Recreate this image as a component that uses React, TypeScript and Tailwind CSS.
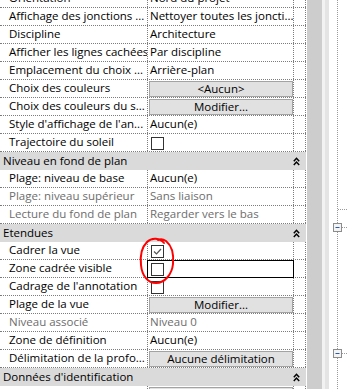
import React from "react";

type Item =
  | { t: "h"; label: string }
  | {
      t: "p";
      name: string;
      value?: string;
      btn?: string;
      check?: "on" | "off";
      grey?: boolean;
      focus?: boolean;
    };

const items: Item[] = [
  { t: "p", name: "Orientation", value: "Nord du projet" },
  { t: "p", name: "Affichage des jonctions ...", value: "Nettoyer toutes les joncti..." },
  { t: "p", name: "Discipline", value: "Architecture" },
  { t: "p", name: "Afficher les lignes cachées", value: "Par discipline" },
  { t: "p", name: "Emplacement du choix ...", value: "Arrière-plan" },
  { t: "p", name: "Choix des couleurs", btn: "<Aucun>" },
  { t: "p", name: "Choix des couleurs du s...", btn: "Modifier..." },
  { t: "p", name: "Style d'affichage de l'an...", value: "Aucun(e)" },
  { t: "p", name: "Trajectoire du soleil", check: "off" },
  { t: "h", label: "Niveau en fond de plan" },
  { t: "p", name: "Plage: niveau de base", value: "Aucun(e)" },
  { t: "p", name: "Plage: niveau supérieur", value: "Sans liaison", grey: true },
  { t: "p", name: "Lecture du fond de plan", value: "Regarder vers le bas", grey: true },
  { t: "h", label: "Etendues" },
  { t: "p", name: "Cadrer la vue", check: "on" },
  { t: "p", name: "Zone cadrée visible", check: "off", focus: true },
  { t: "p", name: "Cadrage de l'annotation", check: "off" },
  { t: "p", name: "Plage de la vue", btn: "Modifier..." },
  { t: "p", name: "Niveau associé", value: "Niveau 0", grey: true },
  { t: "p", name: "Zone de définition", value: "Aucun(e)" },
  { t: "p", name: "Délimitation de la profo...", btn: "Aucune délimitation" },
  { t: "h", label: "Données d'identification" },
  { t: "p", name: "Gabarit de vue", btn: "<Aucun>" },
];

function Chevrons() {
  return (
    <svg width="7" height="9" viewBox="0 0 7 9" className="block">
      <path d="M0.8 4.2 L3.5 1.3 L6.2 4.2 M0.8 8 L3.5 5.1 L6.2 8" fill="none" stroke="#000" strokeWidth="1.5" />
    </svg>
  );
}

function CheckBox({ on }: { on: boolean }) {
  return (
    <div className="mt-[3px] ml-[3px] h-[13px] w-[13px] border border-[#333] bg-white">
      {on && (
        <svg width="11" height="11" viewBox="0 0 11 11" className="block">
          <path d="M2 5.5 L4.5 8 L9 3" fill="none" stroke="#555" strokeWidth="1.2" />
        </svg>
      )}
    </div>
  );
}

function PropRow({ it }: { it: Extract<Item, { t: "p" }> }) {
  const color = it.grey ? "text-[#6d6d6d]" : "text-black";
  return (
    <div className="flex h-[18px] border-b border-dotted border-[#7c7c7c]">
      <div
        className={`w-[148px] shrink-0 overflow-hidden whitespace-nowrap border-r border-dotted border-[#7c7c7c] pl-[9px] leading-[16px] ${color}`}
      >
        {it.name}
      </div>
      <div className="relative w-[146px] shrink-0 overflow-visible whitespace-nowrap border-r border-dotted border-[#7c7c7c]">
        {it.value && <div className={`overflow-hidden pl-[2px] leading-[16px] ${color}`}>{it.value}</div>}
        {it.btn && (
          <div className="mt-px ml-px flex h-[16px] w-[144px] items-center justify-center border border-[#a3a3a3] bg-[#e1e1e1] leading-[14px] text-black">
            {it.btn}
          </div>
        )}
        {it.check && <CheckBox on={it.check === "on"} />}
        {it.focus && <div className="absolute -left-px top-0 -right-px -bottom-px border border-black" />}
      </div>
      <div className="w-[12px] shrink-0 border-r border-dotted border-[#7c7c7c]" />
    </div>
  );
}

function GroupRow({ label }: { label: string }) {
  return (
    <div className="flex h-[18px] bg-[#dadada]">
      <div className="flex-1 pl-[3px] leading-[17px] text-black">{label}</div>
      <div className="flex w-[13px] items-center pl-0">
        <Chevrons />
      </div>
    </div>
  );
}

function Tree() {
  return (
    <svg width="19" height="389" viewBox="0 0 19 389" className="block">
      <line x1="8.5" y1="0" x2="8.5" y2="389" stroke="#9a9a9a" strokeDasharray="1 1" />
      <line x1="9" y1="209.5" x2="19" y2="209.5" stroke="#9a9a9a" strokeDasharray="1 1" />
      {[223, 349].map((y) => (
        <g key={y}>
          <line x1="13" y1={y + 4.5} x2="19" y2={y + 4.5} stroke="#9a9a9a" strokeDasharray="1 1" />
          <rect x="4.5" y={y + 0.5} width="8" height="8" fill="#f4f4f4" stroke="#8c8c8c" />
          <line x1="6.5" y1={y + 4.5} x2="10.5" y2={y + 4.5} stroke="#2b5aa8" strokeWidth="1" />
        </g>
      ))}
    </svg>
  );
}

export default function App() {
  return (
    <div className="relative h-[389px] w-[348px] overflow-hidden bg-white font-['Open_Sans',Arial,sans-serif] text-[11.5px]">
      <div className="flex h-full">
        <div className="-mt-[10px] w-[306px] shrink-0">
          {items.map((it, i) =>
            it.t === "h" ? <GroupRow key={i} label={it.label} /> : <PropRow key={i} it={it} />
          )}
        </div>
        <div className="w-px shrink-0 bg-white" />
        <div className="w-[15px] shrink-0 bg-[#cdcdcd]" />
        <div className="w-[3px] shrink-0 bg-[#f2f2f2]" />
        <div className="w-[4px] shrink-0 bg-[#e4e4e4]" />
        <Tree />
      </div>
      <svg width="42" height="54" viewBox="0 0 42 54" className="pointer-events-none absolute left-[135px] top-[234px]">
        <path
          d="M29 9 C25 4 17 3 12 8 C7 13 5 22 6 31 C7 42 13 49 21 49 C30 49 37 40 38 30 C39 19 36 11 31 7 C28 5 25 5 23 6"
          fill="none"
          stroke="#ff0000"
          strokeWidth="2"
          strokeLinecap="round"
        />
      </svg>
    </div>
  );
}
